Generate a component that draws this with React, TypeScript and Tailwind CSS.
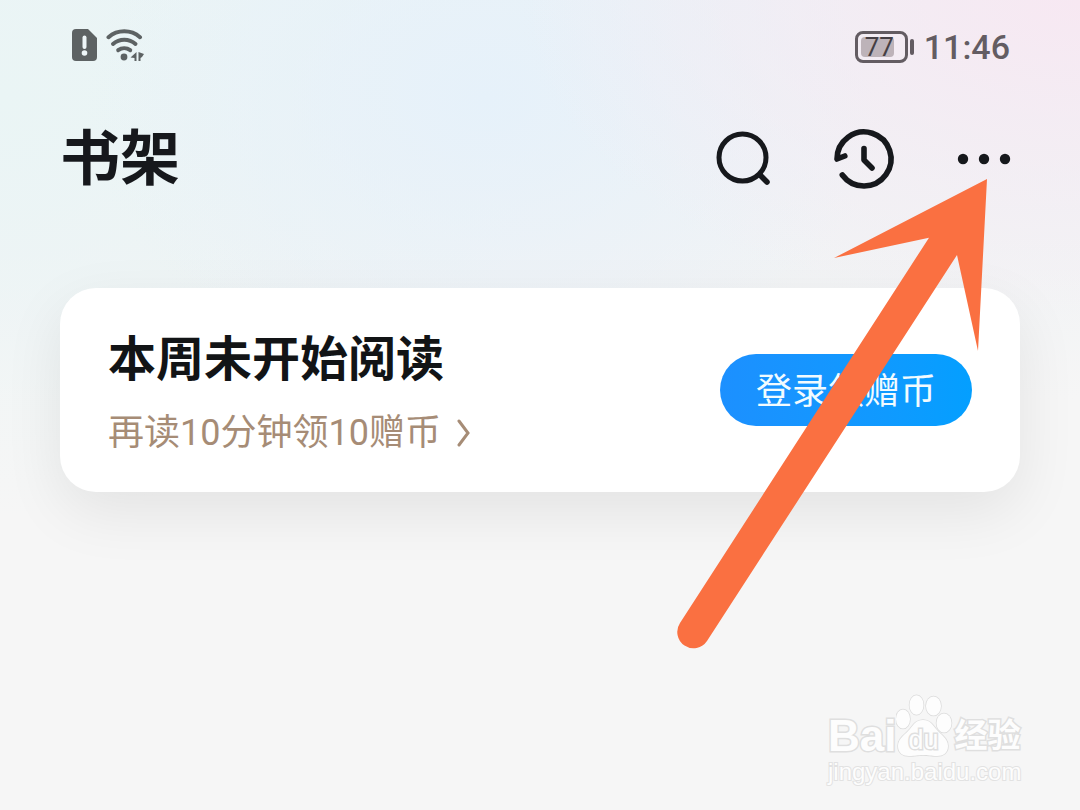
import React from "react";

const StatusBar = () => {
  return (
    <div className="flex h-[94px] items-center justify-between pl-3 pr-2.5 text-[#5d6263]">
      <div className="flex items-center gap-2 pb-1">
        {/* sim warning */}
        <svg width="26" height="34" viewBox="0 0 26 34" aria-label="SIM">
          <path
            d="M4 1h12l9 9v19a4 4 0 0 1-4 4H4a4 4 0 0 1-4-4V5a4 4 0 0 1 4-4z"
            fill="currentColor"
          />
          <path d="M12.5 9.500v9.500" stroke="#eef6f8" strokeWidth="4" strokeLinecap="round" />
          <circle cx="12.500" cy="25" r="2.800" fill="#eef6f8" />
        </svg>
        {/* wifi */}
        <svg width="42" height="34" viewBox="0 0 42 34" fill="none" aria-label="Wi-Fi">
          <g stroke="currentColor" strokeWidth="4" strokeLinecap="round">
            <path d="M2.500 9.200a24 24 0 0 1 31.500 0" />
            <path d="M7 16a17 17 0 0 1 22.500 0" />
            <path d="M12.200 22.200a10 10 0 0 1 12 0" />
          </g>
          <circle cx="18" cy="29" r="3.400" fill="currentColor" />
          <path d="M30.500 24v9h-2v-3l-4-.6zM32.500 33v-9l5.500 2-2 3-1.500 1v3z" fill="currentColor" />
        </svg>
      </div>

      <div className="flex items-center gap-2.5 font-[Roboto,sans-serif] text-[#635c62]">
        <div className="flex items-center gap-0.5">
          <div className="h-8 w-[53px] rounded-lg border-3 border-current p-[3px]">
            <div className="flex h-5 w-[33px] items-center rounded-sm bg-[#bdb3b9] pl-1 text-[26px] leading-5 text-[#453f44]">
              77
            </div>
          </div>
          <div className="h-4 w-1 rounded-full bg-current" />
        </div>
        <span className="text-[34px] font-medium leading-10">11:46</span>
      </div>
    </div>
  );
};

const Header = () => {
  return (
    <header className="flex h-32 items-center justify-between pr-2 text-[#16181c]">
      <h1 className="pb-2 text-[60px] font-bold leading-[72px]">书架</h1>

      <div className="flex items-center gap-[60px]">
        <button type="button" aria-label="搜索">
          <svg width="60" height="60" viewBox="0 0 60 60" fill="none" stroke="currentColor" strokeWidth="5">
            <circle cx="30.500" cy="29.500" r="23.500" />
            <path d="M48 47l7 7" strokeWidth="5.500" strokeLinecap="round" />
          </svg>
        </button>
        <button type="button" aria-label="阅读历史">
          <svg
            width="60"
            height="60"
            viewBox="0 0 60 60"
            fill="none"
            stroke="currentColor"
            strokeWidth="5.600"
            strokeLinecap="round"
            strokeLinejoin="round"
            className="overflow-visible"
          >
            <path d="M12.800 28L5 31A27 27 0 1 1 10.300 47" />
            <path d="M32 20.500V32l8 8" />
          </svg>
        </button>
        <button type="button" aria-label="更多">
          <svg width="60" height="60" viewBox="0 0 60 60" fill="currentColor">
            <circle cx="11" cy="31" r="5.200" />
            <circle cx="32" cy="31" r="5.200" />
            <circle cx="53" cy="31" r="5.200" />
          </svg>
        </button>
      </div>
    </header>
  );
};

const ReadingCard = () => {
  return (
    <section className="mt-[66px] flex items-center justify-between rounded-[36px] bg-white px-12 py-[33px] shadow-[0_20px_60px_rgba(0,0,0,0.08)]">
      <div className="pb-0.5">
        <h2 className="text-5xl font-bold leading-[68px] text-[#121416]">本周未开始阅读</h2>
        <a
          href="#"
          className="mt-5 flex items-center gap-4 font-[Roboto,Noto_Sans_CJK_SC,sans-serif] text-4xl leading-[48px] text-[#a68c76]"
        >
          再读10分钟领10赠币
          <svg width="16" height="28" viewBox="0 0 16 28" fill="none" stroke="currentColor" strokeWidth="3">
            <path d="M2 2l9 12-9 12" strokeLinecap="round" />
          </svg>
        </a>
      </div>

      <button
        type="button"
        className="h-[72px] rounded-full bg-linear-to-r from-[#1c90ff] to-[#049fff] px-9 pb-1 text-4xl text-[#f2fbff]"
      >
        登录领赠币
      </button>
    </section>
  );
};

const Watermark = () => {
  return (
    <div className="absolute right-[58px] top-[694px] w-[194px] text-[#fdfdfd] [-webkit-text-stroke:3px_#dfdfdf] [paint-order:stroke_fill]">
      <div className="flex items-end font-[Liberation_Sans,Noto_Sans_CJK_SC,sans-serif] font-bold">
        <span className="text-[44px] leading-[44px]">Bai</span>
        <div className="relative">
          <svg width="58" height="64" viewBox="0 0 58 64" fill="#fdfdfd" stroke="#dcdcdc" strokeWidth="1.500">
            <ellipse cx="7" cy="25" rx="7" ry="9.500" />
            <ellipse cx="20.500" cy="11" rx="7" ry="9.800" />
            <ellipse cx="37.500" cy="12" rx="7.500" ry="9.500" />
            <ellipse cx="48" cy="29" rx="7.500" ry="9.500" />
            <path d="M27 26c7 0 10 5 13 9 4 5 12 9 12 17 0 7-5 10-11 10-6 0-9-1-14-1s-8 1-14 1c-6 0-11-3-11-10 0-8 8-12 12-17 3-4 6-9 13-9z" />
          </svg>
          <span className="absolute bottom-1 left-3 text-[27px] font-normal leading-7">du</span>
        </div>
        <span className="text-[33px] leading-[44px]">经验</span>
      </div>
      <div className="font-[Liberation_Sans,sans-serif] text-2xl leading-7 [-webkit-text-stroke:2px_#e2e2e2]">
        jingyan.baidu.com
      </div>
    </div>
  );
};

const App = () => {
  return (
    <main className="relative min-h-screen overflow-hidden bg-[#f6f6f6] bg-[radial-gradient(ellipse_560px_320px_at_100%_0%,#f7e8f2,#f7e8f200),radial-gradient(ellipse_400px_300px_at_45%_12%,#e6f1fa,#e6f1fa00),radial-gradient(ellipse_560px_420px_at_0%_12%,#eaf5f5,#eaf5f500),linear-gradient(to_bottom,#ecf3f6,#f1f3f5_240px,#f6f6f6_400px)] px-[60px] pb-8 font-[Noto_Sans_CJK_SC,sans-serif]">
      <StatusBar />
      <Header />
      <ReadingCard />

      {/* pointer to the more button */}
      <svg
        className="pointer-events-none absolute right-20 top-[170px]"
        width="330"
        height="490"
        viewBox="0 0 330 490"
        fill="#fa7041"
      >
        <path d="M317 9L164 88l95-20.300L10 453a16 16 0 0 0 27 18L287 85l21 96z" />
      </svg>

      <Watermark />
    </main>
  );
};

export default App;
